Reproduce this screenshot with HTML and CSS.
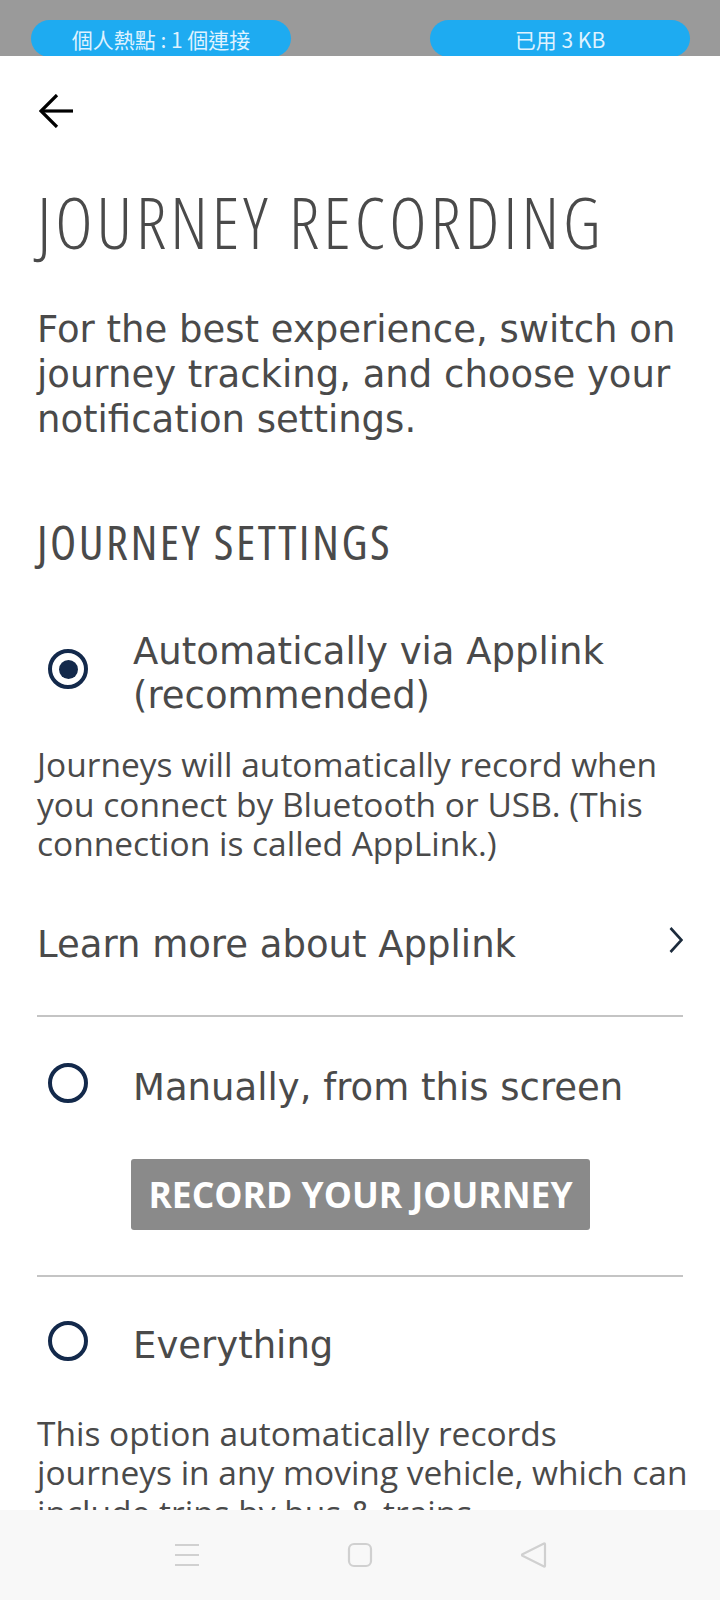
FILE: index.html
```html
<!DOCTYPE html>
<html lang="en">
<head>
    <meta charset="UTF-8">
    <meta name="viewport" content="width=device-width, initial-scale=1.0">
    <title>Journey Recording</title>
    <link rel="stylesheet" href="styles.css">
</head>
<body>
    <div class="statusBar">
        <div class="pill">個人熱點 : 1 個連接</div>
        <div class="pill">已用 3 KB</div>
    </div>

    <div class="page">
        <div class="topBar">
            <svg class="backIcon" width="34" height="34" viewBox="0 0 34 34">
                <polyline points="18,1 2,17 18,33" fill="none" stroke="#000" stroke-width="3.2"/>
                <line x1="2" y1="17" x2="34" y2="17" stroke="#000" stroke-width="3.2"/>
            </svg>
        </div>

        <h1 class="title">JOURNEY RECORDING</h1>
        <p class="intro">For the best experience, switch on journey tracking, and choose your notification settings.</p>

        <h2 class="sectionTitle">JOURNEY SETTINGS</h2>

        <!-- Automatic option -->
        <div class="option first">
            <div class="radio checked"></div>
            <div class="optionLabel">Automatically via Applink (recommended)</div>
        </div>
        <p class="desc">Journeys will automatically record when you connect by Bluetooth or USB. (This connection is called AppLink.)</p>

        <div class="linkRow">
            <span>Learn more about Applink</span>
            <svg class="chevron" width="14" height="26" viewBox="0 0 14 26">
                <polyline points="1.5,1 12.5,13 1.5,25" fill="none" stroke="#1c2b3c" stroke-width="2.6"/>
            </svg>
        </div>

        <div class="divider"></div>

        <!-- Manual option -->
        <div class="option">
            <div class="radio"></div>
            <div class="optionLabel">Manually, from this screen</div>
        </div>
        <div class="recordBtn">RECORD YOUR JOURNEY</div>

        <div class="divider second"></div>

        <!-- Everything option -->
        <div class="option third">
            <div class="radio"></div>
            <div class="optionLabel">Everything</div>
        </div>
        <p class="desc last">This option automatically records journeys in any moving vehicle, which can include trips by bus &amp; trains.</p>
    </div>

    <div class="navBar">
        <svg width="26" height="24" viewBox="0 0 26 24">
            <line x1="1" y1="2" x2="25" y2="2" stroke="#d0d0d0" stroke-width="2"/>
            <line x1="1" y1="12" x2="25" y2="12" stroke="#d0d0d0" stroke-width="2"/>
            <line x1="1" y1="22" x2="25" y2="22" stroke="#d0d0d0" stroke-width="2"/>
        </svg>
        <svg width="26" height="26" viewBox="0 0 26 26">
            <rect x="2" y="2" width="22" height="22" rx="5" fill="none" stroke="#d0d0d0" stroke-width="2.2"/>
        </svg>
        <svg width="27" height="28" viewBox="0 0 27 28">
            <path d="M24 2.5 Q25 2 25 3.5 V24.5 Q25 26 24 25.5 L2.5 14.8 Q1.5 14 2.5 13.2 Z" fill="none" stroke="#d0d0d0" stroke-width="2.2" stroke-linejoin="round"/>
        </svg>
    </div>
</body>
</html>
```

FILE: styles.css
```css
* {
    box-sizing: border-box;
    margin: 0;
    padding: 0;
}

body {
    background: #fff;
    font-family: 'DejaVu Sans', 'Noto Sans', sans-serif;
    color: #4a4a4a;
    width: 720px;
    height: 1600px;
    overflow: hidden;
}

.statusBar {
    height: 56px;
    background: #9a9a9a;
    display: flex;
    justify-content: space-between;
    padding: 20px 30px 0 31px;
    overflow: hidden;
}

.pill {
    width: 260px;
    height: 37px;
    border-radius: 19px;
    background: #1eabf1;
    color: #dff2ff;
    font-family: 'Noto Sans CJK TC', 'Noto Sans', sans-serif;
    font-size: 21px;
    display: flex;
    justify-content: center;
    align-items: center;
}

.page {
    padding: 0 37px;
}

.topBar {
    height: 124px;
    padding-top: 38px;
}

.backIcon {
    margin-left: 2px;
}

.title {
    font-family: 'Open Sans', sans-serif;
    font-weight: 300;
    font-size: 71px;
    font-stretch: 75%;
    letter-spacing: 4px;
    line-height: 84px;
    white-space: nowrap;
    color: #4a4a4a;
}

.intro {
    margin-top: 43px;
    font-size: 37px;
    line-height: 45px;
}

.sectionTitle {
    margin-top: 71px;
    font-family: 'Open Sans', sans-serif;
    font-weight: 400;
    font-size: 48px;
    font-stretch: 75%;
    letter-spacing: 2.5px;
    line-height: 58px;
    color: #4a4a4a;
}

.option {
    display: flex;
    align-items: center;
    gap: 45px;
    margin-top: 46px;
}

.option.first {
    margin-top: 59px;
}

.option.third {
    margin-top: 44px;
}

.radio {
    flex: none;
    width: 40px;
    height: 40px;
    margin: 0 0 10px 11px;
    border: 4.5px solid #13294b;
    border-radius: 50%;
    display: flex;
    justify-content: center;
    align-items: center;
}

.radio.checked::after {
    content: '';
    width: 19px;
    height: 19px;
    border-radius: 50%;
    background: #13294b;
}

.optionLabel {
    font-size: 37px;
    line-height: 44px;
}

.desc {
    margin: 27px -8px 0 0;
    font-family: 'Open Sans', sans-serif;
    font-size: 33.5px;
    line-height: 39.5px;
}

.desc.last {
    margin-top: 43px;
}

.linkRow {
    margin-top: 59px;
    display: flex;
    justify-content: space-between;
    align-items: center;
    font-size: 37px;
    line-height: 44px;
}

.chevron {
    margin-bottom: 10px;
}

.divider {
    margin-top: 48px;
    height: 2px;
    background: #c4c4c4;
}

.divider.second {
    margin-top: 45px;
}

.recordBtn {
    margin: 46px 0 0 94px;
    width: 459px;
    height: 71px;
    border-radius: 3px;
    background: #8a8a8a;
    color: #fff;
    font-family: 'Open Sans', sans-serif;
    font-weight: 700;
    font-size: 35.5px;
    font-stretch: 96%;
    display: flex;
    justify-content: center;
    align-items: center;
}

.navBar {
    position: fixed;
    left: 0;
    bottom: 0;
    width: 720px;
    height: 90px;
    background: #f8f8f8;
    display: flex;
    justify-content: center;
    align-items: center;
    gap: 147px;
}
```
